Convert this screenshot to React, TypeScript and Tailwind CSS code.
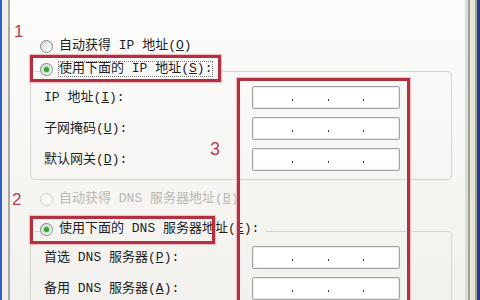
import React from 'react'
import { clsx } from 'clsx'

function Key({ c }: { c: string }) {
  return <span className="underline underline-offset-[1px]">{c}</span>
}

function Radio({ checked, disabled }: { checked?: boolean; disabled?: boolean }) {
  return (
    <span
      className={clsx(
        'flex h-[13px] w-[13px] shrink-0 items-center justify-center rounded-full border bg-linear-to-br',
        disabled ? 'border-[#d2d2cc] from-[#f2f2ef] to-white' : 'border-[#7a8796] from-[#d9d9d3] to-white'
      )}
    >
      {checked && <span className="h-[5px] w-[5px] rounded-full bg-[#35a035] shadow-[0_0_2px_1px_#a6dba6]" />}
    </span>
  )
}

function IpBox() {
  return (
    <div className="flex h-[23px] w-[148px] items-center rounded-[2px] border border-[#a2a2a2] bg-white pl-[39px] pt-[4px] shadow-[inset_0_0_0_1px_#ececec]">
      {[0, 1, 2].map((i) => (
        <span key={i} className="mr-[35px] h-[2px] w-[2px] bg-[#3a3a3a]" />
      ))}
    </div>
  )
}

function Row({ label, first }: { label: React.ReactNode; first?: boolean }) {
  return (
    <div className={clsx('ml-[4px] flex items-center', !first && 'mt-[8px]')}>
      <span className="w-[208px] leading-[14px]">{label}</span>
      <IpBox />
    </div>
  )
}

export default function App() {
  return (
    <div className="flex h-[300px] w-[480px] overflow-hidden font-['Liberation_Mono','Noto_Sans_CJK_SC',monospace] text-[13px] text-[#1f1f1f]">
      <div className="w-[2px] bg-[#2f5fc6]" />
      <div className="w-[6px] bg-[#f0efea]" />
      <div className="w-[2px] bg-[#a9a9a9]" />

      <div className="relative w-[455px] bg-linear-to-b from-[#fcfcfb] to-[#f2f1ed]">
        {/* auto IP */}
        <div className="ml-[30px] mt-[39px] flex h-[14px] items-center gap-[6px] leading-[14px]">
          <Radio />
          <span>自动获得 IP 地址(<Key c="O" />)</span>
        </div>

        {/* static IP group */}
        <fieldset className="ml-[20px] mt-[9px] w-[422px] rounded-[4px] border border-[#d6d6cf] pb-[8px] pl-[9px] pt-[6px]">
          <legend className="h-[18px] pr-[6px]">
            <div className="flex h-[14px] items-center gap-[6px] leading-[14px]">
              <Radio checked />
              <span className="outline-1 outline-dotted outline-[#777]">使用下面的 IP 地址(<Key c="S" />):</span>
            </div>
          </legend>
          <Row first label={<>IP 地址(<Key c="I" />):</>} />
          <Row label={<>子网掩码(<Key c="U" />):</>} />
          <Row label={<>默认网关(<Key c="D" />):</>} />
        </fieldset>

        {/* auto DNS (disabled) */}
        <div className="ml-[30px] mt-[12px] flex h-[14px] items-center gap-[6px] leading-[14px] text-[#b9b9b2]">
          <Radio disabled />
          <span>自动获得 DNS 服务器地址(<Key c="B" />)</span>
        </div>

        {/* static DNS group */}
        <fieldset className="ml-[20px] mt-[16px] w-[422px] rounded-[4px] border border-[#d6d6cf] pb-[8px] pl-[9px] pt-[6px]">
          <legend className="h-[18px] pr-[6px]">
            <div className="flex h-[14px] items-center gap-[6px] leading-[14px]">
              <Radio checked />
              <span>使用下面的 DNS 服务器地址(<Key c="E" />):</span>
            </div>
          </legend>
          <Row first label={<>首选 DNS 服务器(<Key c="P" />):</>} />
          <Row label={<>备用 DNS 服务器(<Key c="A" />):</>} />
        </fieldset>

        {/* red annotations */}
        <div className="pointer-events-none absolute left-[20px] top-[55px] h-[27px] w-[191px] border-[3px] border-[#b2303f] shadow-[0_0_1px_1px_#f0c0c6]" />
        <div className="pointer-events-none absolute left-[20px] top-[216px] h-[28px] w-[185px] border-[3px] border-[#b2303f] shadow-[0_0_1px_1px_#f0c0c6]" />
        <div className="pointer-events-none absolute left-[227px] top-[78px] h-[240px] w-[173px] border-[3px] border-[#b2303f] shadow-[0_0_1px_1px_#f0c0c6]" />
        <span className="absolute left-[4px] top-[23px] font-['Liberation_Sans',sans-serif] text-[17px] leading-none text-[#b5404d]">1</span>
        <span className="absolute left-[2px] top-[191px] font-['Liberation_Sans',sans-serif] text-[17px] leading-none text-[#b5404d]">2</span>
        <span className="absolute left-[200px] top-[140px] font-['Liberation_Sans',sans-serif] text-[18px] leading-none text-[#b5404d]">3</span>
      </div>

      <div className="w-[3px] bg-[#dcdcd8]" />
      <div className="w-[2px] bg-[#9e9e9e]" />
      <div className="w-[5px] bg-[#ebe8d6]" />
      <div className="w-[2px] bg-[#a6a6a6]" />
      <div className="w-[3px] bg-[#1d3f8e]" />
    </div>
  )
}
